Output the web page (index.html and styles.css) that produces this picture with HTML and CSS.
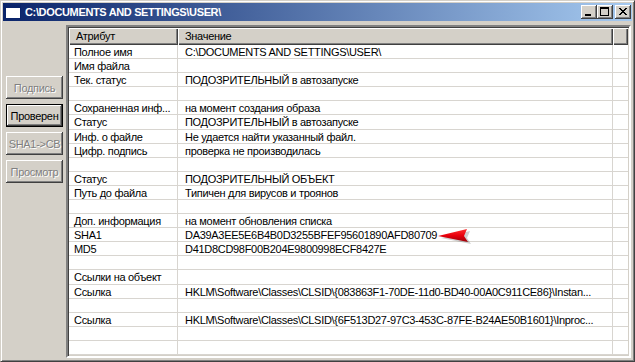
FILE: index.html
```html
<!DOCTYPE html>
<html lang="ru">
<head>
    <meta charset="UTF-8">
    <title>C:\DOCUMENTS AND SETTINGS\USER\</title>
    <link rel="stylesheet" href="styles.css">
</head>
<body>

    <div class="window">
        <!-- Title bar -->
        <div class="titlebar">
            <svg class="app-icon" width="16" height="14" viewBox="0 0 16 14">
                <rect x="0.5" y="0.5" width="15" height="13" fill="#fff" stroke="#0a246a"/>
                <rect x="1" y="1" width="14" height="2" fill="#0a246a"/>
            </svg>
            <span class="title">C:\DOCUMENTS AND SETTINGS\USER\</span>
            <div class="caption-buttons">
                <div class="cap-btn">
                    <svg width="16" height="14" viewBox="0 0 16 14"><rect x="4" y="9" width="6" height="2" fill="#000"/></svg>
                </div>
                <div class="cap-btn">
                    <svg width="16" height="14" viewBox="0 0 16 14"><rect x="3.5" y="2.5" width="8" height="8" fill="none" stroke="#000"/><rect x="3" y="2" width="9" height="2" fill="#000"/></svg>
                </div>
                <div class="cap-btn close">
                    <svg width="16" height="14" viewBox="0 0 16 14"><path d="M4 3 L11 10 M5 3 L12 10 M11 3 L4 10 M12 3 L5 10" stroke="#000" stroke-width="1"/></svg>
                </div>
            </div>
        </div>

        <div class="client">
            <!-- Left buttons -->
            <div class="sidebar">
                <button class="btn disabled">Подпись</button>
                <button class="btn default">Проверен</button>
                <button class="btn disabled">SHA1-&gt;CB</button>
                <button class="btn disabled">Просмотр</button>
            </div>

            <!-- List view -->
            <div class="listview">
                <div class="header">
                    <div class="hcell c1">Атрибут</div>
                    <div class="hcell c2">Значение</div>
                    <div class="hcell c3"></div>
                </div>
                <div class="rows" id="rows"></div>

                <svg class="arrow" width="34" height="17" viewBox="0 0 34 17">
                    <defs>
                        <linearGradient id="ar" x1="0" y1="0" x2="0" y2="1">
                            <stop offset="0" stop-color="#ff3030"/>
                            <stop offset="0.5" stop-color="#e8000c"/>
                            <stop offset="1" stop-color="#9a0008"/>
                        </linearGradient>
                    </defs>
                    <polygon points="2,9 31,2 28,9 32,15" fill="#00000030" transform="translate(1,1)"/>
                    <polygon points="0,8 29,1 26,8 30,14" fill="url(#ar)"/>
                </svg>
            </div>
        </div>
    </div>

    <script>
        const data = [
            ["Полное имя", "C:\\DOCUMENTS AND SETTINGS\\USER\\"],
            ["Имя файла", ""],
            ["Тек. статус", "ПОДОЗРИТЕЛЬНЫЙ в автозапуске"],
            ["", ""],
            ["Сохраненная инф...", "на момент создания образа"],
            ["Статус", "ПОДОЗРИТЕЛЬНЫЙ в автозапуске"],
            ["Инф. о файле", "Не удается найти указанный файл."],
            ["Цифр. подпись", "проверка не производилась"],
            ["", ""],
            ["Статус", "ПОДОЗРИТЕЛЬНЫЙ ОБЪЕКТ"],
            ["Путь до файла", "Типичен для вирусов и троянов"],
            ["", ""],
            ["Доп. информация", "на момент обновления списка"],
            ["SHA1", "DA39A3EE5E6B4B0D3255BFEF95601890AFD80709"],
            ["MD5", "D41D8CD98F00B204E9800998ECF8427E"],
            ["", ""],
            ["Ссылки на объект", ""],
            ["Ссылка", "HKLM\\Software\\Classes\\CLSID\\{083863F1-70DE-11d0-BD40-00A0C911CE86}\\Instan..."],
            ["", ""],
            ["Ссылка", "HKLM\\Software\\Classes\\CLSID\\{6F513D27-97C3-453C-87FE-B24AE50B1601}\\Inproc..."],
            ["", ""],
            ["", ""]
        ];

        const rows = document.getElementById("rows");
        data.forEach(function (r) {
            const row = document.createElement("div");
            row.className = "row";
            row.innerHTML =
                '<div class="cell c1"></div><div class="cell c2"></div><div class="cell c3"></div>';
            row.children[0].textContent = r[0];
            row.children[1].textContent = r[1];
            rows.appendChild(row);
        });
    </script>

</body>
</html>
```

FILE: styles.css
```css
body {
    margin: 0;
    font-family: "Liberation Sans", Arial, sans-serif;
    font-size: 11px;
    color: #000;
    background: #d4d0c8;
}

.window {
    position: relative;
    width: 635px;
    height: 362px;
    box-sizing: border-box;
    background: #d4d0c8;
    border: 1px solid;
    border-color: #d4d0c8 #404040 #404040 #d4d0c8;
    box-shadow: inset 1px 1px #fff, inset -1px -1px #808080;
    padding: 2px;
    display: flex;
    flex-direction: column;
}

/* Title bar */
.titlebar {
    height: 18px;
    display: flex;
    align-items: center;
    background: linear-gradient(to right, #0a246a, #a6caf0);
    padding-left: 2px;
}

.app-icon {
    margin-right: 4px;
}

.title {
    color: #fff;
    font-weight: bold;
    font-size: 11px;
    letter-spacing: -0.35px;
}

.caption-buttons {
    margin-left: auto;
    display: flex;
    margin-right: 1px;
}

.cap-btn {
    width: 16px;
    height: 14px;
    background: #d4d0c8;
    box-shadow: inset -1px -1px #404040, inset 1px 1px #fff, inset -2px -2px #808080;
}

.cap-btn svg {
    display: block;
}

.cap-btn.close {
    margin-left: 2px;
}

/* Client area */
.client {
    flex: 1;
    display: flex;
    margin-top: 1px;
}

.sidebar {
    width: 63px;
    display: flex;
    flex-direction: column;
    gap: 5px;
    padding-top: 54px;
    padding-left: 3px;
    box-sizing: border-box;
}

.btn {
    width: 57px;
    height: 23px;
    padding: 0;
    font-family: "Liberation Sans", Arial, sans-serif;
    font-size: 11px;
    letter-spacing: -0.3px;
    background: #d4d0c8;
    border: none;
    box-shadow: inset -1px -1px #404040, inset 1px 1px #fff, inset -2px -2px #808080;
    color: #000;
}

.btn.disabled {
    color: #808080;
    text-shadow: 1px 1px #fff;
}

.btn.default {
    box-shadow: inset 0 0 0 1px #000, inset -2px -2px #404040, inset 2px 2px #fff, inset -3px -3px #808080;
}

/* List view */
.listview {
    position: relative;
    flex: 1;
    margin: 3px 1px 1px 0;
    background: #fff;
    border: 2px solid;
    border-color: #808080 #fff #fff #808080;
    box-shadow: inset 1px 1px #404040, inset -1px -1px #d4d0c8;
    display: flex;
    flex-direction: column;
    padding: 1px;
    box-sizing: border-box;
    letter-spacing: -0.3px;
}

.header {
    display: flex;
    height: 17px;
}

.hcell {
    background: #d4d0c8;
    box-shadow: inset 1px 1px #fff, inset -1px -1px #404040, inset -2px -2px #808080;
    line-height: 17px;
    padding-left: 7px;
    box-sizing: border-box;
}

.c1 {
    width: 109px;
}

.c2 {
    width: 435px;
}

.c3 {
    flex: 1;
}

.rows {
    flex: 1;
    min-height: 0;
    display: grid;
    grid-template-rows: repeat(22, minmax(0, 1fr));
}

.row {
    display: flex;
    border-bottom: 1px solid #d8d5d0;
    box-sizing: border-box;
}

.cell {
    line-height: 11px;
    padding-top: 2px;
    white-space: nowrap;
    overflow: hidden;
    border-right: 1px solid #d8d5d0;
    box-sizing: border-box;
}

.cell.c1 {
    padding-left: 5px;
}

.cell.c2 {
    padding-left: 7px;
}

.cell.c3 {
    border-right: none;
}

.arrow {
    position: absolute;
    left: 370px;
    top: 201px;
}
```
